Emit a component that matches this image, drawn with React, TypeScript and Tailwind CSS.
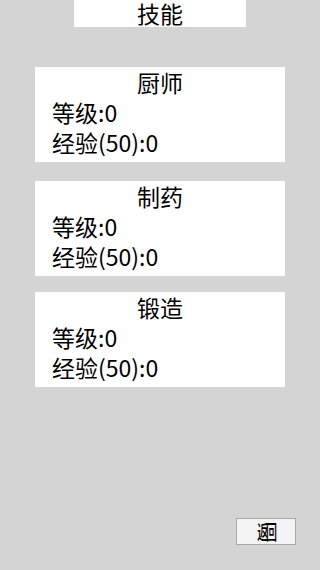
const skills = [
  { name: "厨师", level: 0, exp: 0, max: 50, gap: "mt-[40px]" },
  { name: "制药", level: 0, exp: 0, max: 50, gap: "mt-[19px]" },
  { name: "锻造", level: 0, exp: 0, max: 50, gap: "mt-[16px]" },
];

const App = () => {
  return (
    <div
      className="w-[320px] h-[570px] bg-[#d4d4d4] flex flex-col items-center text-black"
      style={{ fontFamily: '"Noto Sans CJK SC", "Noto Sans", sans-serif' }}
    >
      {/* Title */}
      <div className="w-[172px] h-[27px] bg-white flex items-center justify-center text-[23px] leading-[27px]">
        技能
      </div>

      {/* Skill cards */}
      {skills.map((s) => (
        <div
          key={s.name}
          className={`${s.gap} w-[250px] h-[95px] bg-white pl-[17px] text-[23px] leading-[30px]`}
        >
          <div className="text-center pr-[17px]">{s.name}</div>
          <div>等级:{s.level}</div>
          <div>
            经验({s.max}):{s.exp}
          </div>
        </div>
      ))}

      {/* Back button */}
      <div className="mt-auto mb-[25px] self-end mr-[24px]">
        <button className="w-[60px] h-[27px] bg-[#f4f4f4] border border-[#a8a8a8] flex items-center justify-center overflow-hidden">
          <span className="inline-block text-[20px] leading-none font-medium scale-x-[0.55] tracking-[-4px]">
            返回
          </span>
        </button>
      </div>
    </div>
  );
};

export default App;
